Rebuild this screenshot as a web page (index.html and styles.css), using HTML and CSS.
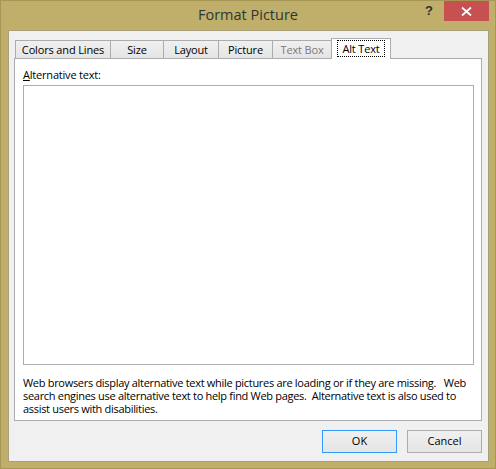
FILE: index.html
```html
<!DOCTYPE html>
<html>
<head>
<meta charset="utf-8">
<title>Format Picture</title>
<link rel="stylesheet" href="styles.css">
</head>
<body>
<div class="window">
  <div class="titlebar">
    <div class="tb-side"></div>
    <div class="title">Format Picture</div>
    <div class="tb-side tb-controls">
      <span class="help">?</span>
      <span class="close">
        <svg width="11" height="9" viewBox="0 0 11 9"><path d="M1 0.5 L10 8.5 M10 0.5 L1 8.5" stroke="#fff" stroke-width="1.8"/></svg>
      </span>
    </div>
  </div>
  <div class="client">
    <div class="tabs">
      <div class="tab tab-colors">Colors and Lines</div>
      <div class="tab tab-size">Size</div>
      <div class="tab tab-layout">Layout</div>
      <div class="tab tab-picture">Picture</div>
      <div class="tab tab-textbox disabled">Text Box</div>
      <div class="tab tab-alt selected"><span class="focus">Alt Text</span></div>
    </div>
    <div class="panel">
      <div class="label"><u>A</u>lternative text:</div>
      <div class="textbox"></div>
      <div class="desc">
        <div class="line">Web browsers display alternative text while pictures are loading or if they are missing.   Web</div>
        <div class="line">search engines use alternative text to help find Web pages.  Alternative text is also used to</div>
        <div class="line">assist users with disabilities.</div>
      </div>
    </div>
    <div class="buttons">
      <div class="btn default">OK</div>
      <div class="btn">Cancel</div>
    </div>
  </div>
</div>
</body>
</html>
```
FILE: styles.css
```css
html, body {
  margin: 0;
  padding: 0;
}
body {
  width: 496px;
  height: 469px;
  overflow: hidden;
  font-family: "Open Sans", "Noto Sans", sans-serif;
  font-size: 11px;
  color: #000;
}
.window {
  box-sizing: border-box;
  width: 496px;
  height: 469px;
  background: #BFAF6A;
  border: 1px solid #A69756;
  display: flex;
  flex-direction: column;
}
.titlebar {
  height: 29px;
  display: grid;
  grid-template-columns: 1fr auto 1fr;
}
.title {
  font-size: 14.5px;
  color: #2E3535;
  line-height: 27px;
}
.tb-controls {
  display: flex;
  justify-content: flex-end;
  align-items: flex-start;
  padding-right: 6px;
}
.help {
  font-family: "Liberation Sans", sans-serif;
  font-weight: bold;
  font-size: 13px;
  color: #333;
  line-height: 20px;
  margin-right: 11px;
}
.close {
  width: 45px;
  height: 20px;
  background: #C75050;
  display: flex;
  align-items: center;
  justify-content: center;
}
.client {
  flex: 1;
  margin: 0 6px 6px 7px;
  background: #F0F0F0;
  border: 1px solid #A8A07A;
  padding: 7px 6px 8px 5px;
  display: flex;
  flex-direction: column;
}
.tabs {
  display: flex;
  align-items: flex-end;
  padding-left: 1px;
  height: 20px;
}
.tab {
  box-sizing: border-box;
  height: 18px;
  border: 1px solid #ACACAC;
  border-bottom: none;
  background: linear-gradient(#F0F0F0, #E5E5E5);
  margin-right: -1px;
  text-align: center;
  line-height: 16px;
  padding-top: 1px;
  letter-spacing: -0.15px;
}
.tab-colors { width: 96px; }
.tab-size { width: 54px; }
.tab-layout { width: 56px; }
.tab-picture { width: 55px; }
.tab-textbox { width: 60px; }
.tab.disabled { color: #7A7A7A; }
.tab.selected {
  position: relative;
  z-index: 1;
  width: 60px;
  height: 21px;
  background: #fff;
  margin-bottom: -1px;
  padding-top: 2px;
  line-height: 15px;
}
.focus {
  display: inline-block;
  outline: 1px dotted #000;
  padding: 0 4px;
  line-height: 15px;
}
.panel {
  flex: 1;
  background: #fff;
  border: 1px solid #ADADAD;
  padding: 8px 7px 0 8px;
  display: flex;
  flex-direction: column;
}
.label {
  line-height: 16px;
  height: 18px;
  letter-spacing: -0.2px;
}
.textbox {
  box-sizing: border-box;
  height: 280px;
  border: 1px solid #ADADAD;
  background: #fff;
}
.desc {
  margin-top: 11px;
}
.line {
  white-space: pre;
  line-height: 13px;
  letter-spacing: -0.3px;
}
.buttons {
  display: flex;
  justify-content: flex-end;
  gap: 10px;
  margin-top: 9px;
}
.btn {
  box-sizing: border-box;
  width: 75px;
  height: 23px;
  border: 1px solid #ADADAD;
  background: linear-gradient(#F0F0F0, #E5E5E5);
  text-align: center;
  line-height: 20px;
}
.btn.default {
  border-color: #3399FF;
}
```
